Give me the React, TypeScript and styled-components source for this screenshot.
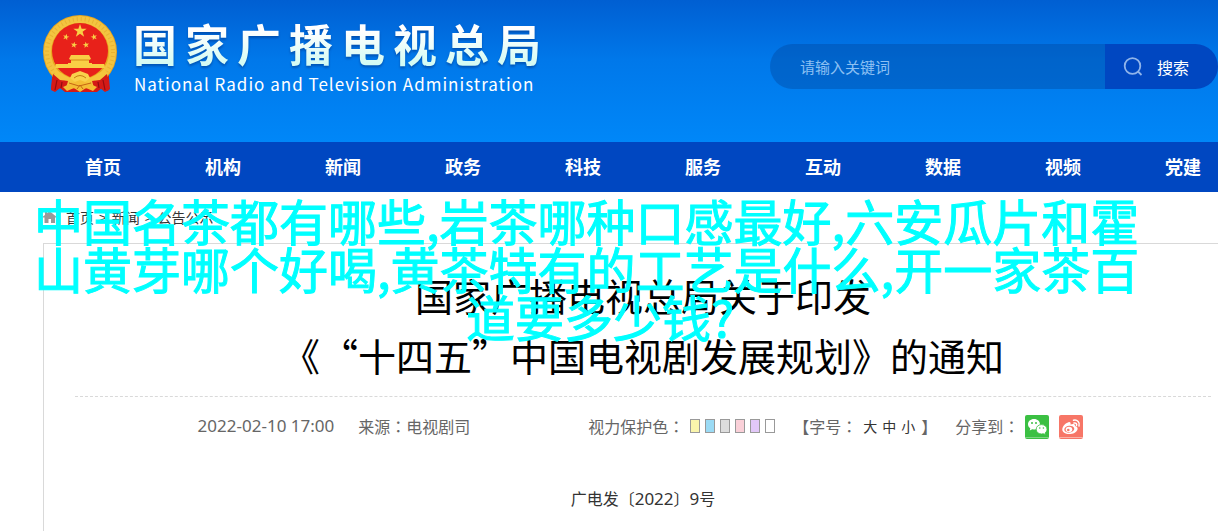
import React from "react";
import styled, { createGlobalStyle } from "styled-components";

const GlobalStyle = createGlobalStyle`
  *, *::before, *::after { box-sizing: border-box; }
  body {
    margin: 0;
    background: #fff;
    color: #333;
    font-family: "Noto Sans CJK SC", "Microsoft YaHei", sans-serif;
    font-size: 16px;
    text-spacing-trim: space-all;
    overflow-x: hidden;
  }
  a { color: inherit; text-decoration: none; }
`;

const Page = styled.div`
  position: relative;
  overflow: hidden;
`;

const Header = styled.header`
  display: flex;
  justify-content: space-between;
  align-items: flex-start;
  height: 142px;
  padding-left: 43px;
  background: linear-gradient(#005fd2 0, #0078ea 60px, #0087f8 142px);
`;

const Brand = styled.a`
  display: flex;
  gap: 14px;
  padding-top: 14px;
`;

const BrandText = styled.div`
  display: flex;
  flex-direction: column;
  color: #fff;
  white-space: nowrap;
`;

const BrandName = styled.span`
  font-size: 44px;
  font-weight: 700;
  line-height: 58px;
  letter-spacing: 8px;
  background: linear-gradient(#fff 30%, #d4fbf3 85%);
  background-clip: text;
  -webkit-background-clip: text;
  color: transparent;
  filter: drop-shadow(0 2px 1px rgba(0, 50, 130, 0.5));
`;

const BrandLatin = styled.span`
  padding-left: 1px;
  font-size: 17px;
  line-height: 24px;
  letter-spacing: 1px;
`;

const Search = styled.form`
  display: flex;
  width: 448px;
  height: 45px;
  margin-top: 44px;
  border-radius: 23px;
  overflow: hidden;
`;

const SearchInput = styled.input`
  flex: 1;
  min-width: 0;
  padding: 0 30px;
  border: 0;
  outline: 0;
  background: rgba(0, 71, 157, 0.4);
  color: #fff;
  font: inherit;
  font-size: 15px;
  &::placeholder { color: #8cc0f3; opacity: 1; }
`;

const SearchButton = styled.button`
  display: flex;
  align-items: center;
  gap: 14px;
  width: 113px;
  padding: 0 0 0 18px;
  border: 0;
  background: #0047c1;
  color: #fff;
  font: inherit;
  font-size: 16px;
`;

const Nav = styled.nav`
  display: flex;
  height: 50px;
  padding-left: 43px;
  background: #0047c1;
`;

const NavLink = styled.a`
  flex: 0 0 120px;
  color: #fff;
  font-size: 18px;
  font-weight: 700;
  line-height: 48px;
  text-align: center;
`;

const Breadcrumb = styled.div`
  display: flex;
  align-items: center;
  gap: 5px;
  height: 51px;
  padding: 0 0 2px 43px;
  font-size: 14px;
  svg { margin-right: 4px; }
`;

const Article = styled.main`
  min-height: 288px;
  margin-left: 43px;
  padding: 21px 7px 0 31px;
  border-top: 1px solid #d9d9d9;
  border-left: 1px solid #d9d9d9;
`;

const Title = styled.h1`
  margin: 0;
  padding-bottom: 11px;
  border-bottom: 1px dashed #d9d9d9;
  color: #000;
  font-size: 38px;
  font-weight: 400;
  line-height: 60px;
  text-align: center;
  white-space: nowrap;
`;

const Meta = styled.div`
  display: flex;
  justify-content: center;
  align-items: center;
  height: 60px;
  padding-right: 5px;
  color: #666;
  white-space: nowrap;
`;

const MetaItem = styled.div<{ $gap: number }>`
  display: flex;
  align-items: center;
  margin-right: ${(p) => p.$gap}px;
  line-height: 24px;
  padding-bottom: 2px;
`;

const Digits = styled.span`
  font-family: "Noto Sans", sans-serif;
  font-size: 17px;
`;

const Colon = styled.span`
  font-family: "Noto Sans CJK JP", sans-serif;
`;

const Swatches = styled.div`
  display: flex;
  gap: 5px;
  margin-left: 6px;
`;

const Swatch = styled.button<{ $color: string }>`
  width: 10px;
  height: 14px;
  padding: 0;
  border: 1px solid #999;
  background: ${(p) => p.$color};
`;

const SizeButtons = styled.div`
  display: flex;
  gap: 5px;
  margin: 0 6px;
`;

const SizeButton = styled.button`
  padding: 0;
  border: 0;
  background: none;
  color: #333;
  font: inherit;
  font-size: 14px;
`;

const ShareLinks = styled.div`
  display: flex;
  gap: 10px;
  padding-top: 2px;
  margin-left: 6px;
`;

const ShareLink = styled.a<{ $color: string }>`
  display: flex;
  width: 24px;
  height: 24px;
  border-radius: 2px;
  background: ${(p) => p.$color};
`;

const DocNumber = styled.p`
  margin: 29px 0 0;
  line-height: 24px;
  text-align: center;
`;

const Caption = styled.p`
  position: absolute;
  top: 196px;
  left: 34px;
  right: 52px;
  margin: 0;
  color: #0ff;
  font-size: 49px;
  font-weight: 400;
  -webkit-text-stroke: 1px #0ff;
  line-height: 48px;
  text-align: left;
  text-align-last: center;
  pointer-events: none;
`;

const STAR = "M0-10 2.3-3.1H9.5L3.7 1.2 5.9 8.1 0 3.8-5.9 8.1-3.7 1.2-9.5-3.1H-2.3Z";

function Emblem() {
  return (
    <svg width="76" height="80" viewBox="0 0 76 80" aria-hidden="true">
      <path d="M10 53 8 75 12 77 17 74 22 78 54 78 59 74 64 77 67 75 65 53Z" fill="#d51a16" />
      <circle cx="37" cy="38" r="37" fill="#e9a61f" />
      <circle cx="37" cy="38" r="32.5" fill="none" stroke="#f3c440" strokeWidth="7" />
      <circle cx="37" cy="38" r="33" fill="none" stroke="#d9981b" strokeWidth="4" strokeDasharray="1 3" opacity=".4" />
      <circle cx="37" cy="37" r="28" fill="#e8211a" />
      <g fill="#f9cf45">
        <path d={STAR} transform="translate(37 17) scale(.7)" />
        <path d={STAR} transform="translate(23 23) rotate(15) scale(.34)" />
        <path d={STAR} transform="translate(51 23) rotate(-15) scale(.34)" />
        <path d={STAR} transform="translate(31 31) rotate(10) scale(.34)" />
        <path d={STAR} transform="translate(43 31) rotate(-10) scale(.34)" />
        <path d="M28 41H46L48 45 46 46V49H49V50H61L62 54H12L13 50H25V49H28V46L26 45Z" />
      </g>
      <path d="M28 46H46" stroke="#d28a18" strokeWidth="1" />
      <path d="M10 56C19 57 24 66 37 66S55 57 64 56L59 66 51 66C45 71 29 71 23 66L15 66Z" fill="#f5c63c" />
      <path d="M10 60 8 76 12 78 17 74 22 77 25 67 17 66ZM64 60 66 76 62 78 57 74 52 77 49 67 57 66Z" fill="#d51a16" />
      <path d="M14 66 12 76M60 66 62 76M19 68 18 74M55 68 56 74" stroke="#930d10" strokeWidth="1.2" />
      <path d="M29 60 37 57 45 60 47 64 42 68H32L27 64Z" fill="#f9d14c" />
      <path d="M31 64Q37 59 43 64" fill="none" stroke="#c67d12" />
      <path d="M29 69 37 66 45 69 54 73 50 77 43 74 37 78 31 74 24 77 20 73Z" fill="#f4bd34" />
      <path d="M26 69 36 72 48 69M34 75 37 71 40 75" fill="none" stroke="#c66512" />
    </svg>
  );
}

function SearchIcon() {
  return (
    <svg width="20" height="20" viewBox="0 0 20 20" fill="none" stroke="#8fb4ea" strokeWidth="1.8" aria-hidden="true">
      <circle cx="9.5" cy="9" r="7.8" />
      <path d="M15 14.5 18.5 18" />
    </svg>
  );
}

function HomeIcon() {
  return (
    <svg width="14" height="14" viewBox="0 0 14 14" fill="#999" aria-hidden="true">
      <path d="M6.5 1 13 6.5V7.5H12V13H8V9H5.5V13H1.5V7.5H0V6.5L2 5V2H4V3.2Z" />
    </svg>
  );
}

function WechatIcon() {
  return (
    <svg width="24" height="24" viewBox="0 0 24 24" aria-hidden="true">
      <path d="M0 22.5H24" stroke="#7fd584" />
      <path d="M9 4C5.5 4 3 6.3 3 9.2 3 11 4 12.4 5.3 13.4L4.7 15.6 7.3 14.2 9 14.5C12.6 14.5 15 12 15 9.2S12.6 4 9 4Z" fill="#fff" />
      <path d="M16.5 9.6C13.4 9.6 11.2 11.7 11.2 14.3S13.4 19 16.5 19L18.3 18.7 20.7 19.8 20 18C21.2 17.1 22 15.8 22 14.3 22 11.7 19.6 9.6 16.5 9.6Z" fill="#fff" stroke="#3bc043" strokeWidth=".8" />
      <g fill="#3bc043">
        <circle cx="7" cy="8" r="1" />
        <circle cx="11" cy="8" r="1" />
        <circle cx="14.8" cy="13" r=".8" />
        <circle cx="18.4" cy="13" r=".8" />
      </g>
    </svg>
  );
}

function WeiboIcon() {
  return (
    <svg width="24" height="24" viewBox="0 0 24 24" aria-hidden="true">
      <path d="M0 22.5H24" stroke="#fab3a9" />
      <path d="M9.5 7.2C11 6.8 12 7.6 11.5 9.4 14 8.5 16.4 8.6 16 11 18 11.5 19 12.7 18.5 14.4 17.5 17.4 14 19 10.3 19 6 19 3.3 17 3.3 14.4 3.3 11.6 6.5 7.9 9.5 7.2Z" fill="#fff" />
      <ellipse cx="10.3" cy="14.2" rx="5" ry="3.4" transform="rotate(-8 10.3 14.2)" fill="#f77667" />
      <ellipse cx="10" cy="14.5" rx="3.3" ry="2.7" fill="#fff" />
      <circle cx="9.3" cy="15" r="1.3" fill="#f77667" />
      <path d="M14.5 5.3C18.2 4.3 21.3 7.5 20 11M15 8C17 7.5 18.2 8.8 17.5 10.5" fill="none" stroke="#fff" strokeWidth="1.5" strokeLinecap="round" />
    </svg>
  );
}

const NAV = ["首页", "机构", "新闻", "政务", "科技", "服务", "互动", "数据", "视频", "党建"];
const COLORS = [
  ["黄色", "#faf5ac"],
  ["蓝色", "#9bdbf5"],
  ["灰色", "#ddd"],
  ["粉色", "#fad0d8"],
  ["紫色", "#e2c8f8"],
  ["白色", "#fff"],
];

export default function App() {
  return (
    <Page>
      <GlobalStyle />
      <Header>
        <Brand href="#">
          <Emblem />
          <BrandText>
            <BrandName>国家广播电视总局</BrandName>
            <BrandLatin>National Radio and Television Administration</BrandLatin>
          </BrandText>
        </Brand>
        <Search onSubmit={(e) => e.preventDefault()}>
          <SearchInput type="text" aria-label="请输入关键词" placeholder="请输入关键词" />
          <SearchButton type="submit">
            <SearchIcon />
            搜索
          </SearchButton>
        </Search>
      </Header>
      <Nav>
        {NAV.map((label) => (
          <NavLink href="#" key={label}>{label}</NavLink>
        ))}
      </Nav>
      <Breadcrumb>
        <HomeIcon />
        <a href="#">首页</a>
        <span>&gt;</span>
        <a href="#">新闻</a>
        <span>&gt;</span>
        <a href="#">公告公示</a>
      </Breadcrumb>
      <Article>
        <Title>
          国家广播电视总局关于印发
          <br />
          《“十四五”中国电视剧发展规划》的通知
        </Title>
        <Meta>
          <MetaItem $gap={24}><Digits>2022-02-10 17:00</Digits></MetaItem>
          <MetaItem $gap={118}>来源<Colon>：</Colon>电视剧司</MetaItem>
          <MetaItem $gap={18}>
            视力保护色<Colon>：</Colon>
            <Swatches>
              {COLORS.map(([name, color]) => (
                <Swatch key={name} type="button" aria-label={name} $color={color} />
              ))}
            </Swatches>
          </MetaItem>
          <MetaItem $gap={18}>
            【字号<Colon>：</Colon>
            <SizeButtons>
              <SizeButton type="button">大</SizeButton>
              <SizeButton type="button">中</SizeButton>
              <SizeButton type="button">小</SizeButton>
            </SizeButtons>
            】
          </MetaItem>
          <MetaItem $gap={0}>
            分享到<Colon>：</Colon>
            <ShareLinks>
              <ShareLink href="#" aria-label="微信" $color="#3bc043"><WechatIcon /></ShareLink>
              <ShareLink href="#" aria-label="微博" $color="#f77667"><WeiboIcon /></ShareLink>
            </ShareLinks>
          </MetaItem>
        </Meta>
        <DocNumber>广电发〔<Digits>2022</Digits>〕<Digits>9</Digits>号</DocNumber>
      </Article>
      <Caption>
        中国名茶都有哪些,岩茶哪种口感最好,六安瓜片和霍山黄芽哪个好喝,黄茶特有的工艺是什么,开一家茶百道要多少钱?
      </Caption>
    </Page>
  );
}
